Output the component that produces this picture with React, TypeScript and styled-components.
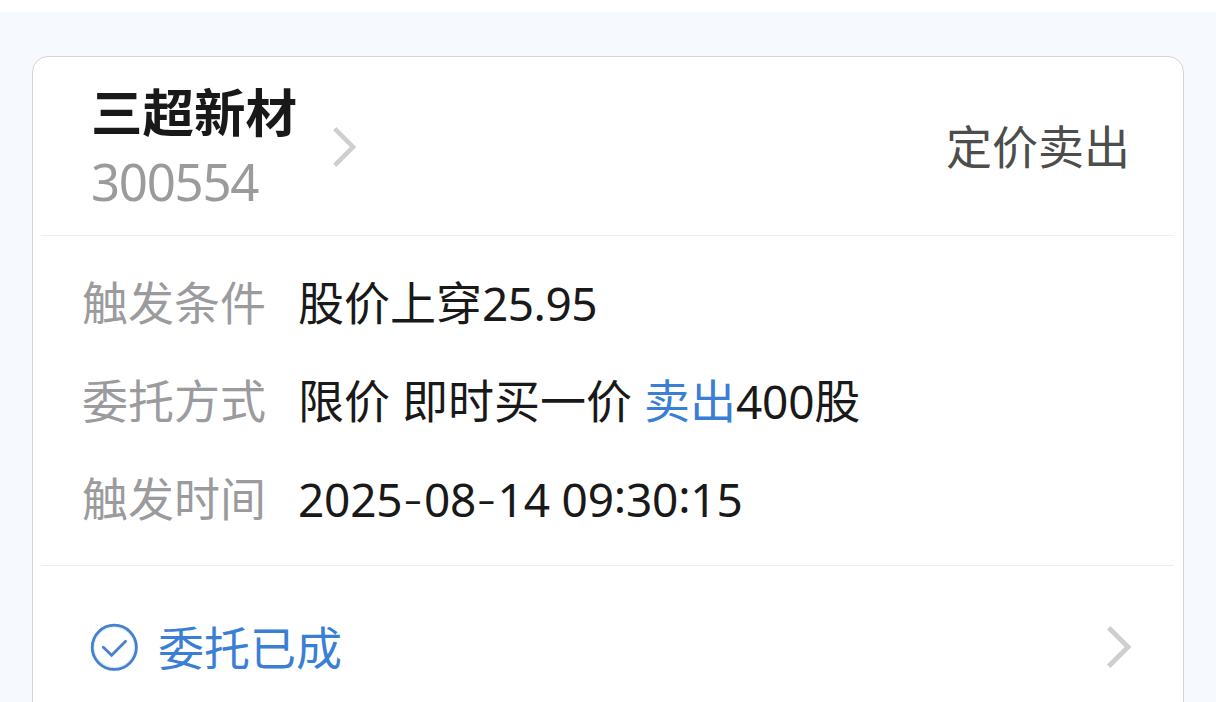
import styled, { createGlobalStyle } from "styled-components";

const GlobalStyle = createGlobalStyle`
  * {
    box-sizing: border-box;
  }
  body {
    margin: 0px;
    overflow: hidden;
    background-color: #fff;
    font-family: "Noto Sans", "Noto Sans CJK SC", sans-serif;
  }
`;

const PageWrap = styled.main`
  width: 100%;
  height: 702px;
  padding: 44px 32px 0px;
  border-top: 12px solid #fff;
  background-color: #f6faff;
  overflow: hidden;
`;

const OrderCard = styled.section`
  height: 720px;
  padding: 0px 9px 0px 8px;
  border: 1px solid #d3d3d7;
  border-radius: 16px;
  background-color: #fff;
`;

const CardHeader = styled.header`
  display: flex;
  height: 179px;
  padding: 2px 44px 0px 50px;
  align-items: center;
  border-bottom: 1px solid #eeeeef;
`;

const StockWrap = styled.div`
  display: flex;
  width: 242px;
  flex-direction: column;
`;

const StockName = styled.h1`
  margin: 0px;
  color: #191919;
  font-size: 51.5px;
  font-weight: bold;
  line-height: 68px;
  white-space: nowrap;
`;

const StockCode = styled.p`
  margin: 0px;
  color: #9b9b9d;
  font-size: 51px;
  line-height: 70px;
  letter-spacing: -1.3px;
`;

const OrderType = styled.p`
  margin: 0px 0px 0px auto;
  padding-bottom: 2px;
  color: #4d4d4b;
  font-size: 46px;
  line-height: 60px;
`;

const DetailList = styled.dl`
  display: flex;
  height: 330px;
  margin: 0px;
  padding: 17px 0px 0px 41px;
  flex-direction: column;
  border-bottom: 1px solid #eeeeef;
`;

const DetailRow = styled.div`
  display: flex;
  height: 98px;
  align-items: center;
  font-size: 46px;
  line-height: 60px;
  white-space: nowrap;
`;

const DetailLabel = styled.dt`
  width: 216px;
  color: #9b9b9d;
`;

const DetailValue = styled.dd`
  margin: 0px;
  color: #191919;
`;

const NumberText = styled.span<{ $spacing: number }>`
  letter-spacing: ${({ $spacing }) => $spacing}px;
  line-height: 1;
  vertical-align: -1px;
`;

const SellText = styled.span`
  color: #3a7fd5;
`;

const Dash = styled.span`
  font-family: Inter, sans-serif;
  font-weight: 300;
  letter-spacing: 0.6px;
`;

const Colon = styled.span`
  vertical-align: 4px;
  line-height: 1;
`;

const StatusRow = styled.footer`
  display: flex;
  height: 162px;
  padding: 0px 43px 0px 49px;
  align-items: center;
`;

const StatusText = styled.p`
  margin: 0px auto 0px 20px;
  padding-bottom: 1px;
  color: #3a7fd5;
  font-size: 46px;
  line-height: 60px;
`;

const IconSvg = styled.svg`
  display: block;
  flex: none;
`;

const Chevron: React.FC<{ width: number; height: number }> = ({
  width,
  height,
}) => (
  <IconSvg width={width} height={height} viewBox="0 0 24 42">
    <path d="M1.7 1.7 21 21 1.7 40.3" fill="none" stroke="#cfcfcf" strokeWidth="4.8" />
  </IconSvg>
);

const CheckIcon: React.FC = () => (
  <IconSvg width="48" height="48" viewBox="0 0 48 48">
    <circle cx="24.3" cy="24.3" r="21.4" fill="#fff" stroke="#e4f0fc" strokeWidth="4" />
    <circle cx="24.3" cy="24.3" r="22.1" fill="none" stroke="#4681cc" strokeWidth="2.8" />
    <path
      d="M13.3 24.3 21.6 32.3 35.6 18.3"
      fill="none"
      stroke="#4681cc"
      strokeWidth="2.8"
      strokeLinecap="round"
    />
  </IconSvg>
);

const App: React.FC = () => {
  return (
    <>
      <GlobalStyle />
      <PageWrap>
        <OrderCard>
          <CardHeader>
            <StockWrap>
              <StockName>三超新材</StockName>
              <StockCode>300554</StockCode>
            </StockWrap>
            <Chevron width={23} height={40} />
            <OrderType>定价卖出</OrderType>
          </CardHeader>
          <DetailList>
            <DetailRow>
              <DetailLabel>触发条件</DetailLabel>
              <DetailValue>
                股价上穿<NumberText $spacing={-0.5}>25.95</NumberText>
              </DetailValue>
            </DetailRow>
            <DetailRow>
              <DetailLabel>委托方式</DetailLabel>
              <DetailValue>
                限价 即时买一价 <SellText>卖出</SellText>
                <NumberText $spacing={-0.2}>400</NumberText>股
              </DetailValue>
            </DetailRow>
            <DetailRow>
              <DetailLabel>触发时间</DetailLabel>
              <DetailValue>
                <NumberText $spacing={-0.2}>
                  2025<Dash>-</Dash>08<Dash>-</Dash>14 09<Colon>:</Colon>30
                  <Colon>:</Colon>15
                </NumberText>
              </DetailValue>
            </DetailRow>
          </DetailList>
          <StatusRow>
            <CheckIcon />
            <StatusText>委托已成</StatusText>
            <Chevron width={24} height={42} />
          </StatusRow>
        </OrderCard>
      </PageWrap>
    </>
  );
};

export default App;
